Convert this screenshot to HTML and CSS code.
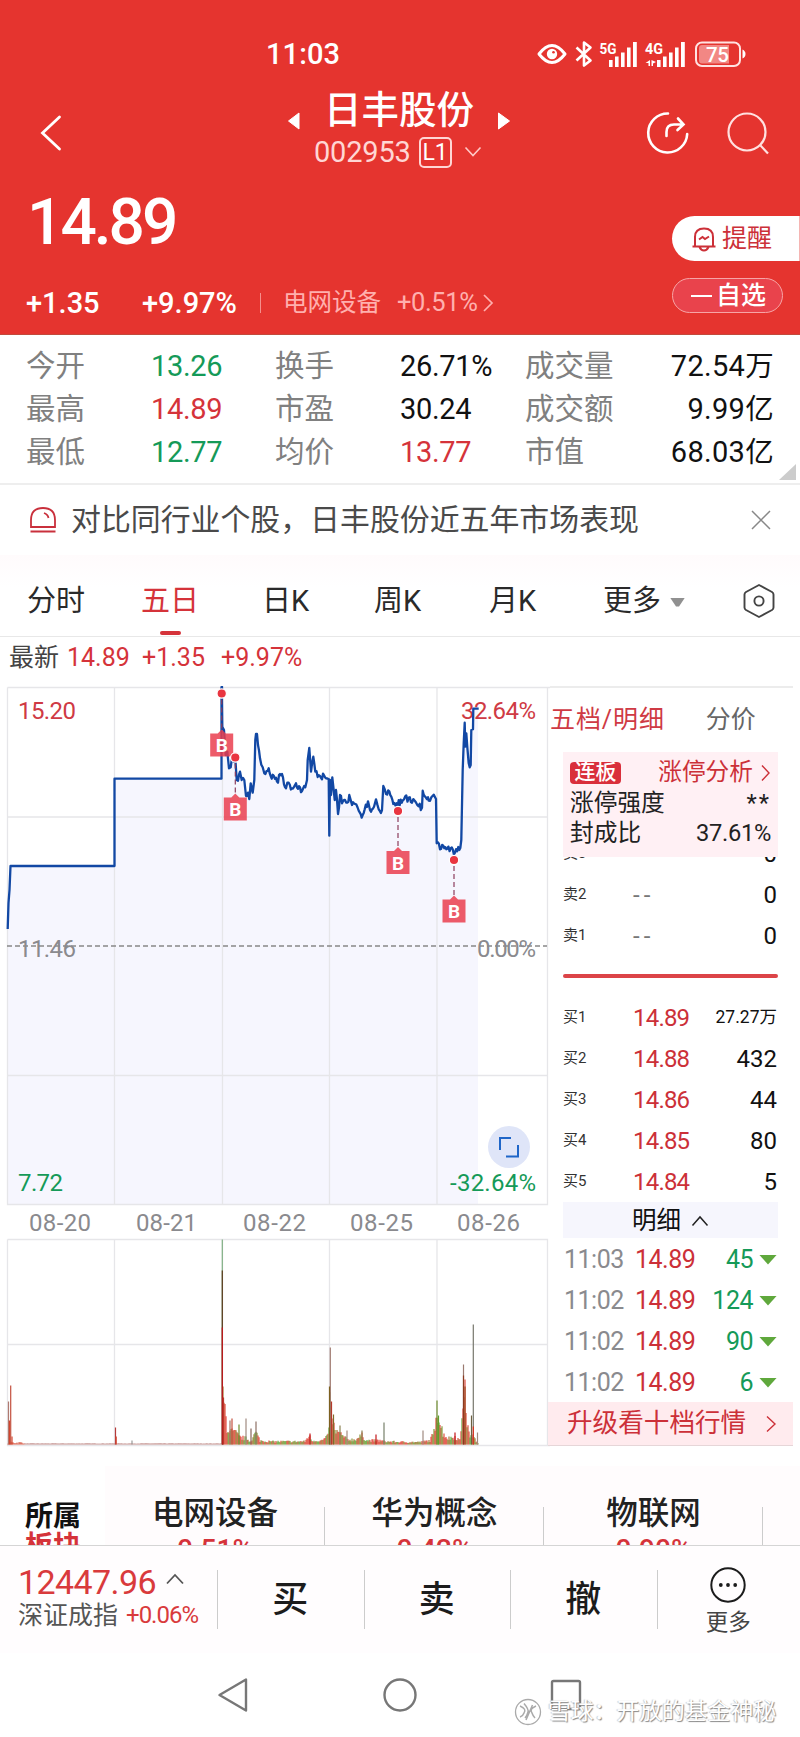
FILE: index.html
```html
<!DOCTYPE html>
<html lang="zh-CN">
<head>
<meta charset="utf-8">
<title>日丰股份 002953</title>
<link rel="stylesheet" href="styles.css">
</head>
<body>
<header class="hero">
  <div class="status">
    <span class="clock">11:03</span>
    <svg class="status-icons" width="212" height="30" viewBox="536 38 212 30">
      <g fill="none" stroke="#fff" stroke-width="3" stroke-linejoin="round">
        <path d="M539 54Q552 37 565 54Q552 71 539 54Z"/>
        <path d="M576.500 47.500L590.500 60.500L584 65.500V42.500L590.500 47.500L576.500 60.500" stroke-width="2.600"/>
      </g>
      <circle cx="552" cy="54" r="5.200" fill="#fff"/><circle cx="553.500" cy="52.300" r="1.300" fill="#e5342f"/>
      <g fill="#fff">
        <path d="M609 60h3.600v7H609zM615 56.500h3.600V67H615zM621 52.500h3.600V67H621zM627 47.500h3.600V67H627zM633 42h3.800V67H633z"/>
        <path d="M657 60h3.600v7H657zM663 56.500h3.600V67H663zM669 52.500h3.600V67H669zM675 47.500h3.600V67H675zM681 42h3.800V67H681z"/>
        <path d="M650 60v6h-1.500v-3h-3zM651.500 60v6h1.500v-2.500l3-1.500z"/>
        <text x="599.500" y="53.500" class="net" textLength="17" lengthAdjust="spacingAndGlyphs">5G</text>
        <text x="645" y="53.500" class="net" textLength="18" lengthAdjust="spacingAndGlyphs">4G</text>
      </g>
      <rect x="696" y="42.500" width="44" height="23.500" rx="6" fill="none" stroke="#ffe3e2" stroke-width="2"/>
      <path d="M702 45h27v18.500h-27q-3 0-3-3v-12.500q0-3 3-3z" fill="#f28784"/>
      <path d="M742.500 49.500q3 1.500 3 4.500t-3 4.500z" fill="#fff"/>
      <text x="706" y="61.500" class="batt" textLength="23">75</text>
    </svg>
  </div>
  <div class="nav">
    <svg class="back" width="24" height="38" viewBox="0 0 24 38"><path d="M20.500 3L3.500 19L20.500 35" fill="none" stroke="#fff" stroke-width="2.800" stroke-linecap="round"/></svg>
    <div class="name-block">
      <div class="name-row">
        <svg width="14" height="20" viewBox="0 0 14 20"><path d="M12 2v16L1.500 10z" fill="#fff" stroke="#fff" stroke-linejoin="round"/></svg>
        <h1 class="name">日丰股份</h1>
        <svg width="14" height="20" viewBox="0 0 14 20"><path d="M1.500 2v16L12.500 10z" fill="#fff" stroke="#fff" stroke-linejoin="round"/></svg>
      </div>
      <div class="code-row">
        <span class="code">002953</span><span class="level">L1</span>
        <svg width="18" height="12" viewBox="0 0 18 12"><path d="M1.500 1.500L9 9.500L16.500 1.500" fill="none" stroke="#ffc9c7" stroke-width="1.600"/></svg>
      </div>
    </div>
    <div class="actions">
      <svg width="44" height="44" viewBox="645 110 44 44"><g fill="none" stroke="#fff" stroke-width="2.600" stroke-linecap="round"><path d="M668 112.500a19.500 19.500 0 1 0 19.200 20.500"/><path d="M666.500 135v-4q0-7.500 7.500-7.500h9M678 117.500l5.500 6l-6 5.500"/></g></svg>
      <svg width="44" height="44" viewBox="725 110 44 44"><g fill="none" stroke="#ffe1e0" stroke-width="2.200"><circle cx="747" cy="131" r="18.500"/><path d="M760.500 144.500l7.500 8"/></g></svg>
    </div>
  </div>
  <div class="quote">
    <div class="quote-left">
      <div class="price">14.89</div>
      <div class="change-row">
        <span class="chg">+1.35</span><span class="pct">+9.97%</span><i class="bar"></i><span class="sector-name">电网设备</span><span class="sector-pct">+0.51%</span>
        <svg width="12" height="20" viewBox="0 0 12 20"><path d="M2 2l8 8l-8 8" fill="none" stroke="#ffb0ae" stroke-width="1.700"/></svg>
      </div>
    </div>
    <div class="quote-right">
      <button class="alert">
        <svg width="26" height="26" viewBox="0 0 26 26" fill="none" stroke="#cc3038" stroke-width="2"><path d="M4 20.500V11q0-8.500 9-8.500t9 8.500v9.500M1.500 20.500h23M8.500 21q1.500 3.500 4.500 3.500t4.500-3.500M8 13.500l3.500-2.500l2.500 2l4-2.500"/></svg>
        <span>提醒</span>
      </button>
      <button class="fav"><i class="minus"></i><span>自选</span></button>
    </div>
  </div>
</header>

<section class="stats">
  <span class="lb">今开</span><b class="dn">13.26</b><span class="lb">换手</span><b>26.71%</b><span class="lb">成交量</span><b class="rt">72.54<em>万</em></b>
  <span class="lb">最高</span><b class="up">14.89</b><span class="lb">市盈</span><b>30.24</b><span class="lb">成交额</span><b class="rt">9.99<em>亿</em></b>
  <span class="lb">最低</span><b class="dn">12.77</b><span class="lb">均价</span><b class="up">13.77</b><span class="lb">市值</span><b class="rt">68.03<em>亿</em></b>
  <i class="corner"></i>
</section>

<section class="notice">
  <svg width="28" height="28" viewBox="0 0 28 28" fill="none" stroke="#c9303c" stroke-width="1.800"><path d="M2 21V14Q2 2 14 2T26 14V21ZM1.500 25.500h25M15 7q4 1.500 4.500 5"/></svg>
  <p>对比同行业个股，日丰股份近五年市场表现</p>
  <svg width="22" height="22" viewBox="0 0 22 22"><path d="M2 2l18 18M20 2L2 20" stroke="#888" stroke-width="1.500"/></svg>
</section>

<nav class="tabs">
  <span>分时</span><span class="on">五日</span><span>日K</span><span>周K</span><span>月K</span><span>更多<i class="caret"></i></span>
  <svg width="34" height="36" viewBox="0 0 34 36" fill="none" stroke="#444" stroke-width="1.900" stroke-linejoin="round"><path d="M17 2L30 9Q31.500 10 31.500 11.500V24.500Q31.500 26 30 27L17 34L4 27Q2.500 26 2.500 24.500V11.500Q2.500 10 4 9Z"/><circle cx="17" cy="18" r="4.600"/></svg>
</nav>

<div class="latest"><span class="cn">最新</span><span class="v1">14.89</span><span class="v2">+1.35</span><span class="v3">+9.97%</span></div>

<main class="board">
  <svg class="chart" width="550" height="762" viewBox="0 686 550 762">
    <path id="area" fill="#f6f6fe"/>
    <g fill="none" stroke="#e6e6e9" stroke-width="1.300">
      <path d="M7.500 687.500H550M7.500 687.500V1204.500H547.500V687.500M7.500 817H547M7.500 1075.500H547M114.500 688V1204M222.500 688V1204M329.500 688V1204M437 688V1204"/>
      <path d="M7.500 1239.500H547.500V1445.500M7.500 1239.500V1445.500H550M7.500 1344.500H547M114.500 1240V1445M222.500 1240V1445M329.500 1240V1445M437 1240V1445"/>
    </g>
    <path d="M7 946H547" stroke="#888" stroke-width="1.300" stroke-dasharray="5 3"/>
    <g class="axis">
      <text x="18" y="719" class="t-up" textLength="58">15.20</text>
      <text x="461" y="719" class="t-up" textLength="75">32.64%</text>
      <text x="18" y="957" class="t-flat" textLength="58">11.46</text>
      <text x="477" y="957" class="t-flat" textLength="59">0.00%</text>
      <text x="18" y="1191" class="t-dn" textLength="45">7.72</text>
      <text x="450" y="1191" class="t-dn" textLength="86">-32.64%</text>
    </g>
    <path id="line" fill="none" stroke="#1248a4" stroke-width="2.300" stroke-linejoin="round"/>
    <g id="marks"></g>
    <circle cx="509" cy="1147" r="21" fill="#dfe5f8"/>
    <path d="M500 1150V1138H511M518 1145V1156.500H506" fill="none" stroke="#1f66c8" stroke-width="2"/>
    <g class="axis dates">
      <text x="29" y="1231" textLength="62">08-20</text>
      <text x="136" y="1231" textLength="61">08-21</text>
      <text x="243" y="1231" textLength="63">08-22</text>
      <text x="350" y="1231" textLength="63">08-25</text>
      <text x="457" y="1231" textLength="63">08-26</text>
    </g>
    <g id="vol"></g>
  </svg>

  <aside class="book">
    <div class="book-tabs"><span class="on">五档/明细</span><span>分价</span></div>
    <div class="limit">
      <div><span class="tag">连板</span><span class="go">涨停分析<svg width="11" height="18" viewBox="0 0 11 18"><path d="M2 1.500l7 7.500l-7 7.500" fill="none" stroke="#cc3038" stroke-width="1.400"/></svg></span></div>
      <div><span>涨停强度</span><span class="stars">**</span></div>
      <div><span>封成比</span><span class="ratio">37.61%</span></div>
    </div>
    <div class="cut"><div class="row"><span>卖3</span><span class="na"></span><b>0</b></div></div>
    <div class="row"><span>卖2</span><span class="na">--</span><b>0</b></div>
    <div class="row"><span>卖1</span><span class="na">--</span><b>0</b></div>
    <div class="split"></div>
    <div class="row"><span>买1</span><span class="p">14.89</span><b class="sm">27.27万</b></div>
    <div class="row"><span>买2</span><span class="p">14.88</span><b>432</b></div>
    <div class="row"><span>买3</span><span class="p">14.86</span><b>44</b></div>
    <div class="row"><span>买4</span><span class="p">14.85</span><b>80</b></div>
    <div class="row"><span>买5</span><span class="p">14.84</span><b>5</b></div>
    <div class="detail">明细<svg width="18" height="12" viewBox="0 0 18 12"><path d="M1.500 10.500L9 2L16.500 10.500" fill="none" stroke="#222" stroke-width="1.500"/></svg></div>
    <div class="tick"><span>11:03</span><span class="p">14.89</span><b>45</b><i></i></div>
    <div class="tick"><span>11:02</span><span class="p">14.89</span><b>124</b><i></i></div>
    <div class="tick"><span>11:02</span><span class="p">14.89</span><b>90</b><i></i></div>
    <div class="tick"><span>11:02</span><span class="p">14.89</span><b>6</b><i></i></div>
    <div class="upgrade">升级看十档行情<svg width="12" height="18" viewBox="0 0 12 18"><path d="M2 1.500l8 7.500l-8 7.500" fill="none" stroke="#cc3038" stroke-width="1.400"/></svg></div>
  </aside>
</main>

<section class="sectors">
  <div class="own">所属<span>板块</span></div>
  <div class="sec s1">电网设备<span>0.51%</span></div>
  <div class="sec s2">华为概念<span>0.42%</span></div>
  <div class="sec s3">物联网<span>0.90%</span></div>
</section>

<footer class="trade">
  <div class="index">
    <div class="iv">12447.96<svg width="20" height="12" viewBox="0 0 20 12"><path d="M2 10.500L10 2L18 10.500" fill="none" stroke="#555" stroke-width="1.800"/></svg></div>
    <div class="in">深证成指<span>+0.06%</span></div>
  </div>
  <div class="act">买</div><div class="act">卖</div><div class="act">撤</div>
  <div class="more">
    <svg width="38" height="38" viewBox="0 0 38 38"><circle cx="19" cy="19" r="16.700" fill="none" stroke="#1c1c1c" stroke-width="2"/><g fill="#1c1c1c"><circle cx="11.800" cy="19" r="1.900"/><circle cx="19" cy="19" r="1.900"/><circle cx="26.200" cy="19" r="1.900"/></g></svg>
    <span>更多</span>
  </div>
</footer>

<div class="sysnav">
  <svg width="400" height="40" viewBox="200 1675 400 40" fill="none" stroke="#777" stroke-width="2.400" stroke-linejoin="round"><path d="M246 1679.500V1710.500L219.500 1695Z"/><circle cx="400" cy="1695" r="15.500"/><path d="M552 1709V1682.500Q552 1681 553.500 1681H578.500Q580 1681 580 1682.500V1709Z"/></svg>
  <div class="mark">
    <svg width="28" height="28" viewBox="0 0 28 28" fill="none"><circle cx="14" cy="14" r="12.500" fill="#fff" stroke="#aaa" stroke-width="1.300"/><path d="M6 8q7 3 4 7q-1 3-4 4M10 5.500q5 6 4 8.500q-1 4-3 6M22 8q-7 3-4 7q1 3 3 5M18.500 7L12 22" stroke="#aaa" stroke-width="1.500"/></svg>
    <span>雪球：开放的基金神秘</span>
  </div>
</div>
<script src="chart.js"></script>
</body>
</html>
```
FILE: styles.css
```css
* { box-sizing: border-box; }
body {
  margin: 0; width: 800px; height: 1737px; overflow: hidden; background: #fff; color: #222;
  font-family: Roboto, "Noto Sans CJK SC", sans-serif; font-size: 29px; line-height: 1;
}
b { font-weight: 400; }
em { font-style: normal; }
svg { display: block; flex: none; }
button { border: 0; font: inherit; margin: 0; padding: 0; }

.hero { height: 335px; background: #e5342f; color: #fff; border-bottom: 1px solid #c24a3c; }
.status { height: 80px; padding: 26px 52px 0 266px; display: flex; align-items: center; justify-content: space-between; }
.clock { font-size: 29px; font-weight: 500; letter-spacing: .1px; padding-top: 3px; }
.net { font: 700 14.5px Roboto, sans-serif; }
.batt { font: 500 20.5px Roboto, sans-serif; fill: #fff; }
.nav { height: 104px; display: flex; padding-left: 39px; }
.back { margin-top: 34px; }
.name-block { width: 260px; margin-left: 206px; }
.name-row { width: 230px; height: 57px; margin-left: 15px; display: flex; align-items: center; justify-content: center; gap: 23px; }
.name-row svg { margin-top: 25px; }
.name { margin: 0; font-size: 37.5px; font-weight: 500; white-space: nowrap; line-height: 56px; padding-top: 2px; }
.code-row { display: flex; align-items: center; height: 30px; padding-left: 45px; }
.code { font-size: 29px; letter-spacing: -.2px; color: #ffd6d4; }
.level { width: 33px; height: 31px; border: 2px solid #ffd6d4; border-radius: 5px; font-size: 23px; text-align: center; line-height: 27px; margin: 0 12px 0 8px; }
.actions { display: flex; gap: 36px; margin: 31px 0 0 116px; }
.quote { display: flex; justify-content: space-between; }
.quote-left { padding-left: 26px; }
.price { font-size: 64px; font-weight: 500; line-height: 78px; letter-spacing: -3px; margin-left: 1px; }
.change-row { display: flex; align-items: center; height: 32px; margin-top: 25px; white-space: nowrap; }
.chg, .pct { font-size: 29px; font-weight: 500; }
.chg { width: 116px; }
.pct { width: 118px; }
.bar { width: 1px; height: 20px; background: #f58f8c; }
.sector-name { font-size: 24.5px; color: #ffb0ae; margin-left: 22px; width: 114px; }
.sector-pct { font-size: 25.5px; color: #ffb0ae; width: 84px; letter-spacing: -.4px; }
.change-row svg { margin-left: 1px; }
.quote-right { width: 128px; padding-top: 32px; }
.alert { width: 128px; height: 45px; border-radius: 23px 0 0 23px; background: #fff; color: #cc3038; display: flex; align-items: center; padding-left: 19px; gap: 5px; font-size: 25px; border-right: 1px solid #f5b5b3; }
.fav { width: 111px; height: 35px; margin-top: 17px; border-radius: 18px; border: 1.5px solid #f7a5a6; background: #e9434c; color: #fff; font-size: 25px; display: flex; align-items: center; padding-left: 18px; gap: 4px; font-weight: 500; }
.minus { width: 21px; height: 2px; background: #fff; }

.stats { position: relative; height: 150px; border-bottom: 2px solid #eee; padding: 10px 26px 0; display: grid; grid-template-columns: 125px 124px 125px 125px 120px 1fr; grid-auto-rows: 43px; align-items: center; white-space: nowrap; color: #111; }
.lb { color: #808080; font-size: 29.5px; }
.stats b { font-size: 29px; letter-spacing: -.3px; }
.stats .dn { color: #159a58; }
.stats .up { color: #d5333a; }
.stats .rt { text-align: right; letter-spacing: .3px; }
.rt em { font-size: 28.5px; }
.corner { position: absolute; right: 4px; bottom: 3px; width: 17px; height: 16px; background: #ccc; clip-path: polygon(100% 0, 100% 100%, 0 100%); }

.notice { height: 70px; display: flex; align-items: center; padding: 0 28px 0 29px; }
.notice p { margin: 0; padding-left: 14px; width: 693px; font-size: 29.9px; color: #4a4a4a; white-space: nowrap; }

.tabs { height: 82px; background: linear-gradient(#fffbfc, #fff 40%); border-bottom: 1px solid #e8e8e8; padding: 11px 24px 0 27px; display: grid; grid-template-columns: 114px 121px 112px 115px 114px 139px 34px; align-items: center; white-space: nowrap; font-size: 29px; color: #2a2a2a; }
.tabs .on { color: #d5333a; position: relative; }
.tabs .on::after { content: ""; position: absolute; left: 19px; top: 44px; width: 21px; height: 4px; border-radius: 2px; background: #d5333a; }
.caret { display: inline-block; width: 15px; height: 9px; margin-left: 9px; background: #909090; clip-path: polygon(0 0, 100% 0, 60% 100%, 40% 100%); vertical-align: 4px; }

.latest { height: 49px; display: flex; align-items: center; padding: 0 0 8px 9px; font-size: 25px; color: #d5333a; white-space: nowrap; }
.latest .cn { color: #444; width: 58px; }
.latest .v1 { width: 75px; }
.latest .v2 { width: 79px; }

.board { display: flex; height: 762px; }
.axis text { font: 24px Roboto, sans-serif; }
.t-up { fill: #cf3a44; }
.t-dn { fill: #159a58; }
.t-flat, .dates { fill: #8a8a8e; }
.badge { font: 700 19px Roboto, sans-serif; fill: #fff; text-anchor: middle; }
.book { width: 243px; border-top: 2px solid #ececec; height: 760px; padding: 0 16px 0 13px; }
.book-tabs { display: flex; gap: 41px; height: 64px; align-items: center; margin-left: -13px; padding-bottom: 1px; font-size: 25px; color: #666; white-space: nowrap; }
.book-tabs .on { color: #cf3a44; letter-spacing: .9px; }
.limit { height: 105px; width: 215px; background: #fff0f4; padding: 6px 7px 0; }
.limit div { display: flex; justify-content: space-between; align-items: center; height: 30.5px; font-size: 23.7px; white-space: nowrap; }
.tag { width: 51px; height: 22px; line-height: 21px; text-align: center; border-radius: 4px; background: #d92f3b; color: #fff; font-size: 21px; font-weight: 500; }
.go { display: flex; align-items: center; gap: 7px; color: #cc3038; }
.stars { letter-spacing: 2px; }
.ratio { letter-spacing: -.3px; }
.cut { height: 17px; overflow: hidden; }
.cut .row { margin-top: -24px; }
.row { height: 41px; width: 214px; display: grid; grid-template-columns: 70px 1fr auto; align-items: center; font-size: 15px; color: #333; white-space: nowrap; }
.row .p { font-size: 24px; color: #cc3038; letter-spacing: -.8px; }
.row .na { font-size: 24px; color: #777; letter-spacing: 4px; }
.row b { font-size: 24px; color: #111; }
.row b.sm { font-size: 17.5px; }
.split { height: 4px; margin: 18px 0 19px; width: 215px; border-radius: 2px; background: #dc4448; }
.detail { height: 36px; width: 215px; background: #f6f6fd; display: flex; align-items: center; justify-content: center; gap: 10px; font-size: 24.5px; color: #111; padding-top: 2px; }
.tick { position: relative; top: 1px; height: 41px; width: 214px; display: grid; grid-template-columns: 71px 62px 56px 25px; align-items: center; justify-items: start; font-size: 25px; color: #8a8a8e; white-space: nowrap; padding-left: 1px; letter-spacing: -.5px; }
.tick .p { color: #cc3038; }
.tick b { color: #159a58; justify-self: end; }
.tick i { width: 18px; height: 10px; background: #5fa83c; clip-path: polygon(0 0, 100% 0, 50% 100%); justify-self: end; margin-right: 1px; }
.upgrade { margin: 0 -16px 0 -15px; height: 44px; background: #ffebee; color: #cc3038; font-size: 25.6px; display: flex; align-items: center; justify-content: space-between; padding: 0 16px 0 19px; border-bottom: 1px solid #e6d6d8; }

.sectors { height: 98px; overflow: hidden; display: flex; background: linear-gradient(#fff 18px, #fffcfd 18px); border-bottom: 1px solid #d5d5d5; white-space: nowrap; }
.own { width: 105px; background: #fff; padding: 54px 0 0 25px; font-size: 28px; font-weight: 700; color: #111; line-height: 30px; }
.own span { display: block; color: #d5333a; }
.sec { width: 219px; padding-top: 49px; font-size: 31.5px; font-weight: 500; text-align: center; line-height: 34px; background: linear-gradient(#ccc, #ccc) 100% 59px / 1px 40px no-repeat; }
.s1 { width: 220px; }
.sec span { display: block; font-size: 28px; color: #d5333a; margin-top: 2px; }

.trade { height: 107px; background: #fffdfe; display: flex; }
.index { width: 217px; padding: 18px 0 0 18px; }
.iv { display: flex; align-items: center; gap: 9px; font-size: 34px; color: #d93a3c; height: 36px; letter-spacing: -.6px; }
.iv svg { margin-bottom: 6px; }
.in { display: flex; align-items: center; height: 30px; font-size: 25px; color: #555; white-space: nowrap; gap: 8px; }
.in span { color: #d93a3c; font-size: 24px; letter-spacing: -1px; }
.act { width: 146.5px; font-size: 36px; font-weight: 500; text-align: center; line-height: 109px; color: #1c1c1c; background: linear-gradient(#ccc, #ccc) 0 24px / 1px 59px no-repeat; }
.more { flex: 1; background: linear-gradient(#ccc, #ccc) 0 24px / 1px 59px no-repeat; display: flex; flex-direction: column; align-items: center; padding-top: 20px; font-size: 22.5px; color: #444; gap: 7px; }

.sysnav { position: relative; height: 84px; padding: 22px 0 0 200px; }
.mark { position: absolute; left: 514px; top: 45px; display: flex; align-items: center; gap: 6px; font-size: 22.8px; color: #fff; white-space: nowrap; text-shadow: 1px 1px 1px #888, -1px 0 1px #ccc; }
```
FILE: chart.js
```javascript
// Deterministic noise in [0, 1)
let seed = 7;
function rnd() { seed = (seed * 16807) % 2147483647; return seed / 2147483647; }

// Intraday prices of the three traded sessions, in thirds of a pixel from (210, 680)
const swing = [[36,20],[36,60],[37,140],[42,150],[47,225],[52,215],[57,265],[62,262],[68,238],[76,235],[80,300],[84,302],[90,275],[95,300],[103,300],[108,348],
[114,338],[118,357],[122,310],[128,338],[133,300],[136,180],[138,162],[141,162],[144,195],[150,235],[158,262],[163,280],[176,265],[182,288],[198,293],
[204,308],[210,282],[216,282],[228,325],[236,308],[246,325],[258,310],[276,333],[286,322],[291,300],[293,240],[298,204],[303,275],[310,230],[316,275],
[330,288],[345,292],[356,297],[358,467],[360,300],[363,345],[367,292],[374,360],[378,330],[384,402],[390,345],[396,370],[405,360],[412,368],[418,345],
[426,375],[436,372],[446,392],[455,413],[464,388],[474,364],[480,390],[492,380],[498,358],[506,388],[516,390],[520,318],[528,342],[538,334],[550,372],
[560,370],[575,368],[582,358],[596,353],[606,368],[614,362],[622,375],[636,383],[638,332],[654,352],[656,362],[664,352],[678,357],[680,490],[690,508],
[700,497],[712,506],[722,505],[735,518],[748,510],[754,480],[758,270],[761,190],[764,128],[766,200],[769,160],[776,250],[782,255],[784,150],[789,148],[790,86],[806,86]];
let d = "M7.700 929L8.500 903L9.500 890L10.500 866H114.500V778.700H221.500V687";
let prev = swing[0];
for (const p of swing) {
  const n = Math.floor((p[0] - prev[0]) / 3);
  for (let i = 1; i < n; i++) {
    const t = i / n;
    const j = p[1] === 86 ? 0 : (rnd() - .5) * 22;
    d += "L" + (210 + (prev[0] + (p[0] - prev[0]) * t) / 3).toFixed(1) + " " + (680 + (prev[1] + (p[1] - prev[1]) * t + j) / 3).toFixed(1);
  }
  d += "L" + (210 + p[0] / 3).toFixed(1) + " " + (680 + p[1] / 3).toFixed(1);
  prev = p;
}
document.getElementById("line").setAttribute("d", d);
document.getElementById("area").setAttribute("d", d + "H478V1204H7.700Z");

// Trade markers: dot x, dot y, badge top
let m = "";
for (const [x, y, b] of [[221.7,693.5,733.5],[235.3,757.5,797.5],[398,811,851],[454,860,899.500]]) {
  m += `<path d="M${x} ${y + 6}V${b - 3}" stroke="#8c3c5c" stroke-width="1.200" stroke-dasharray="5 3"/>
  <path d="M${x - 11.500} ${b}H${x - 4}L${x} ${b - 4}L${x + 4} ${b}H${x + 11.500}V${b + 23}H${x - 11.500}Z" fill="#e93c4c" fill-opacity=".84"/>
  <text x="${x}" y="${b + 18.500}" class="badge">B</text>
  <circle cx="${x}" cy="${y}" r="4.700" fill="#e93540" stroke="#fff" stroke-width="1.200"/>`;
}
document.getElementById("marks").innerHTML = m;

// Volume: envelope of ordinary bars, then the spikes
const env = [[223,44],[225,36],[227,18],[230,13],[235,12],[240,7],[247,6],[250,3],[256,12],[260,4],[270,3],[290,3],[305,3],[309,9],[312,4],[322,4],[328,8],
[330,42],[332,26],[335,14],[341,10],[347,5],[355,5],[362,9],[367,4],[380,4],[386,3],[400,2.500],[420,2.500],[430,4],[434,12],[437,40],[439,25],[443,12],
[448,6],[455,8],[460,4],[462,30],[464,66],[466,32],[469,10],[472,10],[475,5],[478,1]];
const spikes = [[8.500,43,"#b07a70"],[9.500,24,"#d2452f"],[10.700,59,"#c4503f"],[12,8,"#d2452f"],[115.500,17,"#b53a3a"],[116.200,8,"#d2452f"],[132,4,"#999"],
[222.300,205,"#7fae83"],[222.300,174,"#5d3a1c"],[222.300,117,"#c3161c"],[223.500,47,"#b53a2a"],[230,24,"#a86f5e"],[232,26,"#c4503f"],[239,20,"#6d8b2c"],
[246,26,"#a08a80"],[251,16,"#87655a"],[256,23,"#8d7065"],[310,11,"#c3161c"],[330.300,97,"#a07a70"],[329.500,58,"#7c6020"],[331.500,43,"#b53a2a"],
[333.500,30,"#7f6b2a"],[340,19,"#8a8050"],[347,14,"#a58a80"],[362,14,"#8a8050"],[376,10,"#c3161c"],[384,22,"#77806a"],[423,14,"#a08a80"],
[437,44,"#6d8b2c"],[438.500,29,"#5fa02c"],[455,12,"#c3161c"],[463.500,80,"#9a7a70"],[463.500,69,"#8a3a20"],[465,58,"#9c4a20"],[471.500,29,"#6d6040"],
[473.300,120,"#77776c"],[473.300,18,"#e0301c"],[477.500,12,"#a08a80"]];
const cols = ["#e0392c", "#55a32c", "#9a6a22", "#d8402c", "#7c8f2a"];
let v = "";
function bar(x, h, c, w) { v += `<path d="M${x} ${1444.500 - h}V1444.500" stroke="${c}" stroke-width="${w}"/>`; }
for (let x = 8; x < 222; x += 1) bar(x, .8 + (x < 25 ? rnd() * 2 : rnd() * .5), x < 25 ? "#d2452f" : "#b87c78", 1);
let k = 0;
for (let x = 223; x <= 478; x += 1) {
  while (env[k + 1] && env[k + 1][0] < x) k++;
  const a = env[k], b = env[k + 1] || a;
  const h = a === b ? a[1] : a[1] + (b[1] - a[1]) * (x - a[0]) / (b[0] - a[0]);
  bar(x, Math.max(1, h * (.6 + rnd() * .75)), cols[Math.floor(rnd() * 5)], 1.1);
}
for (const s of spikes) bar(s[0], s[1], s[2], 1.2);
document.getElementById("vol").innerHTML = v;
```
